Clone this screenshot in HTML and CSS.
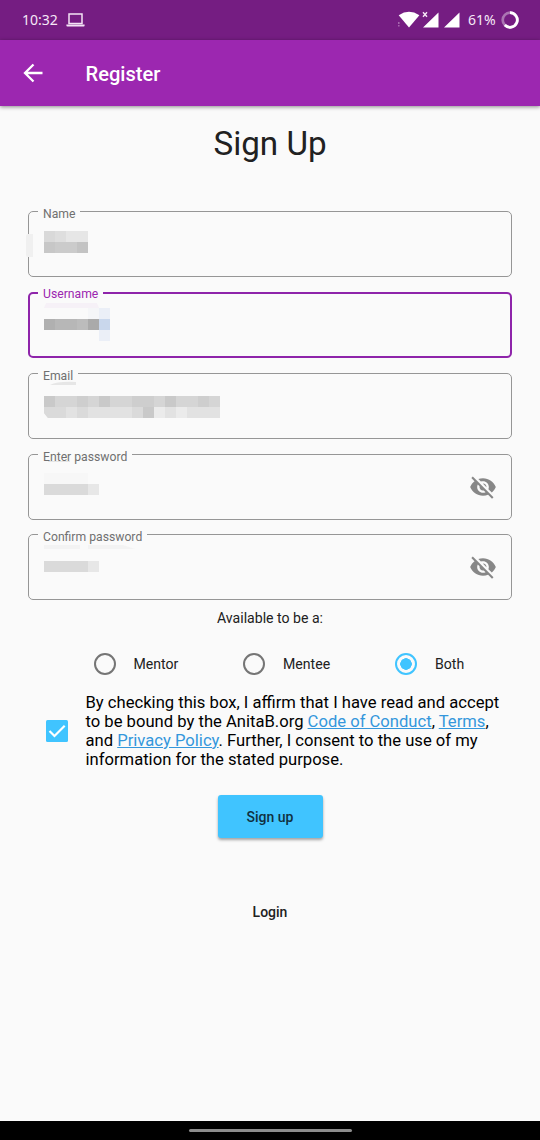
FILE: index.html
```
<!DOCTYPE html>
<html lang="en">
<head>
<meta charset="utf-8">
<title>Register</title>
<link rel="stylesheet" href="styles.css">
</head>
<body>
<div class="screen">
  <div class="status">
    <span class="clock">10:32</span>
    <svg class="laptop" width="19" height="14" viewBox="0 0 19 14"><path d="M3 .9h13v9.6H3z" fill="none" stroke="#f3e3f5" stroke-width="1.5"/><path d="M.4 11.6h18.2v1q0 .9-1 .9H1.400q-1 0-1-.9z" fill="#f3e3f5"/></svg>
    <svg class="signals" width="64" height="20" viewBox="0 0 64 20"><path d="M.7 5.200Q11 -1.700 21.400 5.200L11 17.500z" fill="#fff"/><path d="M.8 12v2M.8 15v1.500" stroke="#a86bb0" stroke-width="1.500"/><path d="M25 2.200l4 4.600M29 2.200l-4 4.600" stroke="#f6e8f7" stroke-width="1.400"/><path d="M40.500 2.500v15H25zM61.500 2.500v15H46z" fill="#fff"/></svg>
    <span class="percent">61%</span>
    <svg class="battery" width="18" height="18" viewBox="0 0 18 18"><circle cx="9" cy="9" r="7.300" fill="none" stroke="#aa75b2" stroke-width="2.700"/><path d="M9 1.700a7.300 7.300 0 1 1-5.200 12.400" fill="none" stroke="#fff" stroke-width="2.800"/></svg>
  </div>
  <header class="appbar">
    <svg class="back" width="20" height="20" viewBox="0 0 20 20"><path d="M19.500 10H2M10.500 1.500L2 10l8.500 8.500" fill="none" stroke="#fff" stroke-width="2.300"/></svg>
    <h1 class="bar-title">Register</h1>
  </header>
  <main class="content">
    <h2 class="heading">Sign Up</h2>
    <div class="fields">
      <div class="field">
        <fieldset class="outline"><legend class="label">Name</legend></fieldset>
        <svg class="mosaic" viewBox="0 0 484 66"><path fill="#f0f0f0" d="M-2 25q0-2 2-2h5v23H0q-2 0-2-2z"/><path fill="#d9d9d9" d="M16 20h11v11H16z"/><path fill="#dedede" d="M27 20h11v11H27z"/><path fill="#e6e6e6" d="M38 20h22v11H38z"/><path fill="#c7c7c7" d="M16 31h11v11H16z"/><path fill="#cbcbcb" d="M27 31h22v11H27z"/><path fill="#c3c3c3" d="M49 31h11v11H49z"/></svg>
      </div>
      <div class="field focused">
        <fieldset class="outline"><legend class="label">Username</legend></fieldset>
        <svg class="mosaic" viewBox="0 0 484 66"><path fill="#f6f1f7" d="M18 11h51l2 5H16z"/><path fill="#ebeff7" d="M71 16h11v33H71z"/><path fill="#f5f6f8" d="M60 16h11v11H60z"/><path fill="#b0b0b0" d="M16 27h11v11H16z"/><path fill="#b7b7b7" d="M27 27h22v11H27z"/><path fill="#bcbcbc" d="M49 27h11v11H49z"/><path fill="#aaa" d="M60 27h11v11H60z"/><path fill="#c9d7ec" d="M71 27h11v11H71z"/></svg>
      </div>
      <div class="field">
        <fieldset class="outline"><legend class="label">Email</legend></fieldset>
        <svg class="mosaic" viewBox="0 0 484 66"><path fill="#e6e6e6" d="M22 12q8-4 26-3v3z"/><path fill="#d5d5d5" d="M16 23h176v11H16z"/><path fill="#c9c9c9" d="M16 23h11v11H16zM71 23h11v11H71zM137 23h11v11h-11z"/><path fill="#cecece" d="M49 23h11v11H49zM104 23h22v11h-22zM170 23h11v11h-11z"/><path fill="#e2e2e2" d="M16 34h176v11H20l-4-5z"/><path fill="#dadada" d="M16 34h22v11H20l-4-5zM49 34h11v11H49zM104 34h11v11h-11z"/><path fill="#c9c9c9" d="M115 34h11v11h-11z"/><path fill="#ebebeb" d="M126 34h11v11h-11zM148 34h11v11h-11z"/></svg>
      </div>
      <div class="field">
        <fieldset class="outline"><legend class="label">Enter password</legend></fieldset>
        <svg class="mosaic" viewBox="0 0 484 66"><path fill="#f7f7f7" d="M16 19h44v11H16z"/><path fill="#e5e5e5" d="M20 7h22v1H20z"/><path fill="#dadada" d="M16 30h44v11H16z"/><path fill="#e7e7e7" d="M60 30h11v11H60z"/></svg>
        <svg class="eye" viewBox="0 0 24 24"><path d="M12 7c2.760 0 5 2.240 5 5 0 .65-.13 1.260-.36 1.830l2.920 2.920c1.510-1.260 2.700-2.890 3.430-4.750-1.730-4.390-6-7.500-11-7.500-1.400 0-2.740.25-3.980.7l2.160 2.160C10.740 7.130 11.350 7 12 7zM2 4.270l2.280 2.280.46.46C3.080 8.300 1.780 10.020 1 12c1.730 4.390 6 7.500 11 7.500 1.550 0 3.030-.3 4.380-.84l.42.42L19.730 22 21 20.730 3.270 3 2 4.270zM7.530 9.800l1.550 1.550c-.05.21-.08.43-.08.65 0 1.660 1.340 3 3 3 .22 0 .44-.03.65-.08l1.550 1.550c-.67.33-1.410.53-2.200.53-2.760 0-5-2.240-5-5 0-.79.2-1.530.53-2.200zm4.310-.78l3.150 3.150.02-.16c0-1.660-1.340-3-3-3l-.17.01z"/></svg>
      </div>
      <div class="field">
        <fieldset class="outline"><legend class="label">Confirm password</legend></fieldset>
        <svg class="mosaic" viewBox="0 0 484 66"><path fill="#f3f3f3" d="M16 11h36v4H16zM60 11h35l12 4H60z"/><path fill="#dadada" d="M16 27h44v11H16z"/><path fill="#e7e7e7" d="M60 27h11v11H60z"/></svg>
        <svg class="eye" viewBox="0 0 24 24"><path d="M12 7c2.760 0 5 2.240 5 5 0 .65-.13 1.260-.36 1.830l2.920 2.920c1.510-1.260 2.700-2.890 3.430-4.750-1.730-4.390-6-7.500-11-7.500-1.400 0-2.740.25-3.980.7l2.160 2.160C10.740 7.130 11.350 7 12 7zM2 4.270l2.280 2.280.46.46C3.080 8.300 1.780 10.020 1 12c1.730 4.390 6 7.500 11 7.500 1.550 0 3.030-.3 4.380-.84l.42.42L19.730 22 21 20.730 3.270 3 2 4.270zM7.530 9.800l1.550 1.550c-.05.21-.08.43-.08.65 0 1.660 1.340 3 3 3 .22 0 .44-.03.65-.08l1.550 1.550c-.67.33-1.410.53-2.200.53-2.760 0-5-2.240-5-5 0-.79.2-1.530.53-2.200zm4.310-.78l3.150 3.150.02-.16c0-1.660-1.340-3-3-3l-.17.01z"/></svg>
      </div>
    </div>
    <p class="available">Available to be a:</p>
    <div class="roles">
      <label class="role"><span class="radio"></span>Mentor</label>
      <label class="role"><span class="radio"></span>Mentee</label>
      <label class="role"><span class="radio selected"></span>Both</label>
    </div>
    <div class="terms">
      <svg class="check" width="22" height="22" viewBox="0 0 22 22"><rect width="22" height="22" rx="1.500" fill="#40c4ff"/><path d="M3.500 11l5 5L18.700 5.800" fill="none" stroke="#fff" stroke-width="2.200"/></svg>
      <p class="terms-text">By checking this box, I affirm that I have read and accept<br>to be bound by the AnitaB.org <a class="link">Code of Conduct</a>, <a class="link">Terms</a>,<br>and <a class="link">Privacy Policy</a>. Further, I consent to the use of my<br>information for the stated purpose.</p>
    </div>
    <button class="signup">Sign up</button>
    <a class="login">Login</a>
  </main>
  <div class="navbar"><span class="handle"></span></div>
</div>
</body>
</html>
```
FILE: styles.css
```
* { box-sizing: border-box; }
body { margin: 0; font-family: Roboto, sans-serif; color: #212121; }
svg { display: block; flex: none; }
.screen { width: 540px; height: 1140px; background: #fafafa; display: flex; flex-direction: column; overflow: hidden; }
.status { height: 40px; background: #751d82; color: #f6e8f7; display: flex; align-items: center; padding: 0 21px 1px 22px; font: 14px/20px "Noto Sans", sans-serif; }
.clock { width: 36px; }
.laptop { margin-left: 8px; }
.signals { margin-left: auto; }
.percent { margin-left: 6px; width: 28px; white-space: nowrap; font-size: 14px; }
.battery { margin-left: 5px; }
.appbar { height: 66px; flex: none; background: #9c27b0; box-shadow: 0 1px 4px rgba(0,0,0,.45); display: flex; align-items: center; padding-left: 23px; z-index: 1; }
.bar-title { margin: 2px 0 0 42.500px; color: #fff; font-size: 20.100px; font-weight: 500; line-height: 24px; }
.content { flex: 1; display: flex; flex-direction: column; padding: 18px 28px 0; }
.heading { margin: 0; text-align: center; font-size: 33.200px; font-weight: 400; line-height: 40px; height: 87px; }
.fields { display: grid; grid-template-rows: 81px 81px 81px 80px 66px; }
.field { display: grid; height: 66px; }
.field > * { grid-area: 1 / 1; }
.outline { min-width: 0; margin: 0; padding: 0 0 0 9px; border: 1px solid #969696; border-radius: 5px; }
.label { height: 1px; line-height: 6px; padding: 0 5px; font-size: 12.200px; color: #707070; white-space: nowrap; }
.focused .outline { border: 2px solid #8e24aa; padding-left: 8px; }
.focused .label { height: 2px; line-height: 5px; color: #9c27b0; }
.mosaic { width: 484px; height: 66px; overflow: visible; }
.eye { width: 28px; height: 28px; fill: #878787; justify-self: end; align-self: center; margin-right: 15px; }
.available { margin: 8px 0 0; text-align: center; font-size: 14.100px; line-height: 20px; }
.roles { display: grid; grid-template-columns: 149.500px 152px 1fr; margin: 25px 0 0 65.500px; }
.role { display: flex; align-items: center; gap: 18px; font-size: 14.100px; line-height: 22px; }
.radio { width: 22px; height: 22px; border: 2px solid #757575; border-radius: 50%; }
.radio.selected { border-color: #40c4ff; background: radial-gradient(circle, #40c4ff 5.500px, transparent 6px); }
.terms { display: flex; align-items: center; gap: 17.500px; margin: 18px 0 0 18px; }
.terms-text { margin: 0; color: #000; font-size: 16.620px; line-height: 19px; white-space: nowrap; }
.link { color: #3497dc; text-decoration: underline; }
.signup { align-self: center; margin-top: 26px; width: 105px; height: 43px; border: 0; border-radius: 3px; background: #40c4ff; box-shadow: 0 2px 3px rgba(0,0,0,.35); font: 500 14px Roboto, sans-serif; color: #10303f; }
.login { align-self: center; margin-top: 64px; font-size: 14px; font-weight: 500; line-height: 20px; }
.navbar { height: 19px; flex: none; background: #000; display: flex; justify-content: center; align-items: center; }
.handle { width: 163px; height: 3px; border-radius: 2px; background: #8c8c8c; }
```
